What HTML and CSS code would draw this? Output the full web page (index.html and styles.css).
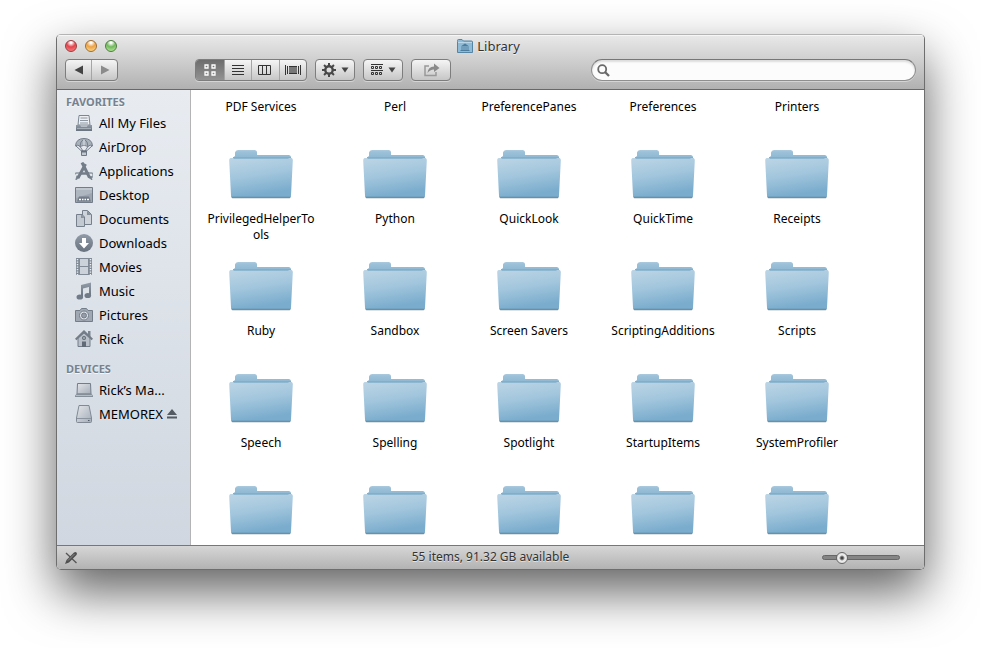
FILE: index.html
```html
<!DOCTYPE html>
<html lang="en">
<head>
<meta charset="utf-8">
<title>Library</title>
<link rel="stylesheet" href="styles.css">
</head>
<body>
<svg class="defs" aria-hidden="true">
  <defs>
    <linearGradient id="folder-front" x1="0" y1="0" x2="0.25" y2="1">
      <stop offset="0" stop-color="#bdd5e5"/><stop offset="0.5" stop-color="#a2c6dd"/><stop offset="1" stop-color="#7aaccd"/>
    </linearGradient>
    <linearGradient id="folder-back" x1="0" y1="0" x2="0" y2="1">
      <stop offset="0" stop-color="#abcadf"/><stop offset="0.2" stop-color="#9cc1d9"/><stop offset="1" stop-color="#8ab4d0"/>
    </linearGradient>
    <linearGradient id="steel" x1="0" y1="0" x2="0" y2="1">
      <stop offset="0" stop-color="#929ca8"/><stop offset="1" stop-color="#68727f"/>
    </linearGradient>
    <linearGradient id="pale" x1="0" y1="0" x2="1" y2="1">
      <stop offset="0" stop-color="#e4e7eb"/><stop offset="1" stop-color="#a4acb7"/>
    </linearGradient>
    <symbol id="folder" viewBox="0 0 64 50">
      <path d="M2.500 46h59v1.300q0 1-1 1H3.500q-1 0-1-1z" fill="#7a8b98"/>
      <path d="M4 10V7.500L6 6V2.500Q6.500 0 9 0H25.500Q28 0 28 2.500V5H59.500Q62 5 62 7.500L63 10z" fill="url(#folder-back)"/>
      <path d="M4 7.500H62" stroke="#7fafcc"/>
      <path d="M1.500 8H4L5 9H59L60 8H62.500Q64 8.500 63.800 10.500L62 45.500Q62 47 60.500 47H3.500Q2 47 2 45.500L0.200 10.500Q0 8.500 1.500 8z" fill="url(#folder-front)"/>
      <path d="M2.500 46.500H61.500" stroke="#6f9fbe" stroke-opacity=".7"/>
    </symbol>
  </defs>
</svg>

<main class="window">
  <header class="titlebar">
    <div class="title-row">
      <div class="lights">
        <button class="light close" aria-label="Close"></button>
        <button class="light minimize" aria-label="Minimize"></button>
        <button class="light expand" aria-label="Zoom"></button>
      </div>
      <h1 class="title">
        <svg width="16" height="14" viewBox="0 0 16 14"><path d="M.5 2.500V1.500Q.5.500 1.500.500H5L6.500 2H14.500Q15.500 2 15.500 3V13.500H.5z" fill="#8fbbd6" stroke="#5485a5"/><path d="M1 3.500H15" stroke="#b9d7e8"/><path d="M4 7.200L8 4.500 12 7.200z" fill="#4d7d9d"/><path d="M5 7.500V11M7 7.500V11M9 7.500V11M11 7.500V11" stroke="#4d7d9d" stroke-width=".9"/><path d="M3.500 11.500H12.500" stroke="#4d7d9d"/></svg>
        Library
      </h1>
    </div>
    <div class="toolbar">
      <div class="group nav">
        <button aria-label="Back"><svg width="10" height="10" viewBox="0 0 10 10"><path d="M9 .5V9.500L.5 5z" fill="#444"/></svg></button>
        <button aria-label="Forward"><svg width="10" height="10" viewBox="0 0 10 10"><path d="M1 .5V9.500L9.500 5z" fill="#8b8b8b"/></svg></button>
      </div>
      <div class="group views">
        <button class="active" aria-label="Icon view"><svg width="12" height="12" viewBox="0 0 12 12" fill="none" stroke="#fff" stroke-width="1.300"><path d="M1 1H4V4H1zM8 1H11V4H8zM1 8H4V11H1zM8 8H11V11H8z"/></svg></button>
        <button aria-label="List view"><svg width="12" height="12" viewBox="0 0 12 12" stroke="#333"><path d="M0 1.500H12M0 4.500H12M0 7.500H12M0 10.500H12"/></svg></button>
        <button aria-label="Column view"><svg width="14" height="12" viewBox="0 0 14 12" fill="none" stroke="#333"><path d="M.5 1.500H12.500V10.500H.5zM4.500 1V11M8.500 1V11"/></svg></button>
        <button aria-label="Cover Flow"><svg width="16" height="12" viewBox="0 0 16 12" stroke="#333"><path d="M4 2H12V9.500H4z" fill="#777" stroke="none"/><path d="M.5 1V11M2.500 2V10M13.500 2V10M15.500 1V11M4 2.500H12M4 9.500H12"/></svg></button>
      </div>
      <button class="tool" aria-label="Actions">
        <svg width="14" height="14" viewBox="0 0 14 14" fill="none" stroke="#484848"><circle cx="7" cy="7" r="3.700" stroke-width="2.400"/><path d="M7 0V3M7 11V14M0 7H3M11 7H14M2.050 2.050L4.200 4.200M9.800 9.800L11.950 11.950M2.050 11.950L4.200 9.800M9.800 4.200L11.950 2.050" stroke-width="2"/></svg>
        <svg width="8" height="6" viewBox="0 0 8 6"><path d="M.5.500H7.500L4 5.500z" fill="#444"/></svg>
      </button>
      <button class="tool" aria-label="Arrange">
        <svg width="12" height="12" viewBox="0 0 12 12" stroke="#333" fill="none"><path d="M0 .5H12M0 6.500H12"/><path d="M.5 2.500H2.500V4.500H.500zM4.500 2.500H6.500V4.500H4.500zM8.500 2.500H10.500V4.500H8.500zM.5 8.500H2.500V10.500H.500zM4.500 8.500H6.500V10.500H4.500zM8.500 8.500H10.500V10.500H8.500z"/></svg>
        <svg width="8" height="6" viewBox="0 0 8 6"><path d="M.5.500H7.500L4 5.500z" fill="#444"/></svg>
      </button>
      <button class="tool" aria-label="Share">
        <svg width="17" height="14" viewBox="0 0 17 14"><path d="M6 3H2V12.500H13V9" fill="none" stroke="#999" stroke-width="1.500"/><path d="M4.500 10Q5 3.800 11 3.500V.5L16.500 5 11 9V6.500Q7 6.500 4.500 10z" fill="#8a8a8a"/></svg>
      </button>
      <label class="search">
        <svg width="13" height="13" viewBox="0 0 13 13" fill="none" stroke="#6a6a6a"><circle cx="5.200" cy="5.200" r="4" stroke-width="1.800"/><path d="M8 8L12 12" stroke-width="2.300"/></svg>
        <input type="search" aria-label="Search">
      </label>
    </div>
  </header>

  <div class="body">
    <nav class="sidebar">
      <h2>FAVORITES</h2>
      <ul>
        <li><a href="#"><svg viewBox="0 0 18 18"><path d="M4 1.500H14L15 11H3z" fill="#eef0f3" stroke="#7d8793"/><path d="M5.500 4H12.500M5 6.500H13M5 9H13" stroke="#8d96a1"/><path d="M1 11H5L6 12.500H12L13 11H17V17H1z" fill="url(#steel)"/><path d="M2 14.500H16" stroke="#a5adb7"/></svg>All My Files</a></li>
        <li><a href="#"><svg viewBox="0 0 18 18"><path d="M.5 8Q1 .5 9 .5T17.500 8Q15 6 13 8.500 9 6 5 8.500 3 6 .5 8z" fill="#a9b1bb" stroke="#737d89"/><path d="M9 1Q5 3 5 8.500M9 1Q13 3 13 8.500" fill="none" stroke="#737d89"/><path d="M9 1V7.500" stroke="#dfe3e8"/><path d="M1 8L7 13.500M17 8L11 13.500M5 8.500L8 13M13 8.500L10 13" fill="none" stroke="#737d89"/><path d="M6.500 13H11.500V17.500H6.500z" fill="#c3c9d0" stroke="#6e7884"/><path d="M6 13.500H12" stroke="#68727f" stroke-width="2"/></svg>AirDrop</a></li>
        <li><a href="#"><svg viewBox="0 0 18 18" fill="none" stroke="#737d89"><path d="M0 12.500Q0 11 1.500 11H5M13 11H16.500Q18 11 18 12.500V15H16" stroke="#8e97a2" stroke-width="1.500"/><path d="M7 .5L14.500 15.500M10.500 2L3 16" stroke-width="3"/><path d="M5 11.500H14" stroke-width="2.500"/><path d="M2 13.500L.8 17.800 4.500 15.500M13.500 15.500L17 17.800 16 14" fill="#737d89" stroke-width=".8"/></svg>Applications</a></li>
        <li><a href="#"><svg viewBox="0 0 18 18"><path d="M.5 1.500H17.500V16.500H.5z" fill="#aeb6bf" stroke="#737d89"/><path d="M1 3H17" stroke="#d5dae0"/><path d="M1 16V12L17 7V16z" fill="#9ca5b0"/><path d="M2 15.500L4 10.500H14L16 15.500z" fill="#737d89"/><path d="M4 13.500H6M7 13.500H8.500M9.500 13.500H11M12 13.500H14" stroke="#fff" stroke-width="1.500"/></svg>Desktop</a></li>
        <li><a href="#"><svg viewBox="0 0 18 18"><path d="M1.500 4.500H7L9.500 7V16.500H1.500z" fill="#c3c9d1" stroke="#76808c"/><path d="M7.500 .5H12.500L16.500 4.500V14.500H9.500V7L7.500 5z" fill="#cfd4da" stroke="#76808c"/><path d="M12 .5V5H16.500zM6 4.500V8H9.500z" fill="#87919c"/></svg>Documents</a></li>
        <li><a href="#"><svg viewBox="0 0 18 18"><circle cx="9" cy="9" r="9" fill="url(#steel)"/><path d="M7 4H11V9H14L9 14.500 4 9H7z" fill="#fff"/></svg>Downloads</a></li>
        <li><a href="#"><svg viewBox="0 0 18 18"><path d="M1 0H17V17H1z" fill="#818b97"/><path d="M5 1H13V8H5zM5 9H13V16H5z" fill="#ccd2d9"/><path d="M2.500 1V17M15.500 1V17" stroke="#edf0f3" stroke-width="1.400" stroke-dasharray="1.200 1.300"/></svg>Movies</a></li>
        <li><a href="#"><svg viewBox="0 0 18 18"><path d="M6 3L16 .5V14H14V5L8 6.500V15H6z" fill="url(#steel)"/><ellipse cx="4.800" cy="15" rx="3.300" ry="2.600" fill="#717b87"/><ellipse cx="12.800" cy="13.500" rx="3.300" ry="2.600" fill="#717b87"/></svg>Music</a></li>
        <li><a href="#"><svg viewBox="0 0 18 18"><path d="M.5 4.500H5L6.500 2.500H11.500L13 4.500H17.500V15.500H.5z" fill="#a0a9b3" stroke="#737d89"/><circle cx="9" cy="9.500" r="4.500" fill="#e0e4e8" stroke="#737d89"/><circle cx="9" cy="9.500" r="2.500" fill="#939ca7" stroke="#737d89"/></svg>Pictures</a></li>
        <li><a href="#"><svg viewBox="0 0 18 18"><path d="M3 8L9 3 15 8V16.500H3z" fill="#b9c0c9" stroke="#737d89"/><path d="M13 1H15.500V7L13 5z" fill="#7b8591"/><path d="M.7 9.500L9 1.500 17.300 9.500" fill="none" stroke="#737d89" stroke-width="2.200"/><circle cx="9" cy="8" r="2" fill="#5f6975"/><circle cx="9" cy="8" r=".8" fill="#dfe3e8"/><path d="M7 11.500H11V17H7z" fill="#606a76"/></svg>Rick</a></li>
      </ul>
      <h2>DEVICES</h2>
      <ul>
        <li><a href="#"><svg viewBox="0 0 18 18"><path d="M2.500 2.500H15.500L16 13H2z" fill="url(#pale)" stroke="#737d89"/><path d="M2 12.500H16L18 14.500V16H0V14.500z" fill="#858f9a"/><path d="M1 14.500H17" stroke="#b5bcc5"/></svg>Rick’s Ma...</a></li>
        <li><a href="#"><svg viewBox="0 0 18 18"><path d="M4 .5H14L16.500 13V16.500Q16.500 17.500 15.500 17.500H2.500Q1.500 17.500 1.500 16.500V13z" fill="url(#pale)" stroke="#808994"/><path d="M2 13.500H16" stroke="#8b949f"/><path d="M13 15.500H14.500" stroke="#505a66"/></svg>MEMOREX</a><button class="eject" aria-label="Eject"><svg width="10" height="10" viewBox="0 0 10 10"><path d="M5 0L10 6H0zM0 7.500H10V9.500H0z" fill="#555b62"/></svg></button></li>
      </ul>
    </nav>

    <section class="files">
      <div class="item"><span>PDF Services</span></div>
      <div class="item"><span>Perl</span></div>
      <div class="item"><span>PreferencePanes</span></div>
      <div class="item"><span>Preferences</span></div>
      <div class="item"><span>Printers</span></div>
      <div class="item"><svg><use href="#folder"/></svg><span>PrivilegedHelperTo<wbr>ols</span></div>
      <div class="item"><svg><use href="#folder"/></svg><span>Python</span></div>
      <div class="item"><svg><use href="#folder"/></svg><span>QuickLook</span></div>
      <div class="item"><svg><use href="#folder"/></svg><span>QuickTime</span></div>
      <div class="item"><svg><use href="#folder"/></svg><span>Receipts</span></div>
      <div class="item"><svg><use href="#folder"/></svg><span>Ruby</span></div>
      <div class="item"><svg><use href="#folder"/></svg><span>Sandbox</span></div>
      <div class="item"><svg><use href="#folder"/></svg><span>Screen Savers</span></div>
      <div class="item"><svg><use href="#folder"/></svg><span>ScriptingAdditions</span></div>
      <div class="item"><svg><use href="#folder"/></svg><span>Scripts</span></div>
      <div class="item"><svg><use href="#folder"/></svg><span>Speech</span></div>
      <div class="item"><svg><use href="#folder"/></svg><span>Spelling</span></div>
      <div class="item"><svg><use href="#folder"/></svg><span>Spotlight</span></div>
      <div class="item"><svg><use href="#folder"/></svg><span>StartupItems</span></div>
      <div class="item"><svg><use href="#folder"/></svg><span>SystemProfiler</span></div>
      <div class="item"><svg><use href="#folder"/></svg></div>
      <div class="item"><svg><use href="#folder"/></svg></div>
      <div class="item"><svg><use href="#folder"/></svg></div>
      <div class="item"><svg><use href="#folder"/></svg></div>
      <div class="item"><svg><use href="#folder"/></svg></div>
    </section>
  </div>

  <footer class="status">
    <svg width="14" height="14" viewBox="0 0 14 14"><path d="M2 2L12.500 12" stroke="#555" stroke-width="1.300"/><path d="M1 13L2.500 9 10 1.500Q11.500.5 12.500 1.500T12.500 4L5 11.500z" fill="#505050"/><path d="M4 9.500L10.500 3" stroke="#888"/></svg>
    <span>55 items, 91.32 GB available</span>
    <input type="range" min="0" max="100" value="21" aria-label="Icon size">
  </footer>
</main>
</body>
</html>
```
FILE: styles.css
```css
* { box-sizing: border-box; }

body {
  margin: 0;
  padding: 34px 56px 78px;
  background: #fff;
  color: #000;
  font: 12px/16px "Noto Sans", "Open Sans", sans-serif;
}

button {
  margin: 0;
  padding: 0;
  border: 0;
  background: none;
}

.defs {
  position: absolute;
  width: 0;
  height: 0;
}

.window {
  overflow: hidden;
  border: 1px solid #6e6e6e;
  border-top-color: #b4b4b4;
  border-radius: 5px;
  box-shadow: 0 22px 50px rgba(0, 0, 0, 0.62);
}

.titlebar {
  padding: 0 8px 8px;
  border-bottom: 1px solid #686868;
  background: linear-gradient(#e9e9e9, #b1b1b1);
  box-shadow: inset 0 1px #f6f6f6;
}

.title-row {
  display: grid;
  grid-template-columns: 1fr auto 1fr;
  align-items: center;
  height: 22px;
  margin-bottom: 2px;
}

.lights {
  display: flex;
  gap: 8px;
}

.light {
  width: 12px;
  height: 12px;
  border: 1px solid;
  border-radius: 50%;
}

.close {
  border-color: #9b3b40;
  background: radial-gradient(circle at 50% 15%, #fff 0 8%, #e2444b 45%, #ff8a88 100%);
}

.minimize {
  border-color: #a06c30;
  background: radial-gradient(circle at 50% 15%, #fff 0 8%, #eca244 45%, #ffe698 100%);
}

.expand {
  border-color: #4d7c40;
  background: radial-gradient(circle at 50% 15%, #fff 0 8%, #71b85c 45%, #c4f4a6 100%);
}

.title {
  display: flex;
  align-items: center;
  gap: 4px;
  margin: 0;
  padding-right: 4px;
  color: #333;
  font-size: 13px;
  font-weight: 400;
  text-shadow: 0 1px #f0f0f0;
}

.toolbar {
  display: flex;
  gap: 8px;
}

.group,
.tool {
  display: flex;
  height: 22px;
  border: 1px solid #7d7d7d;
  border-radius: 4px;
  background: linear-gradient(#f5f5f5, #c6c6c6);
  box-shadow: 0 1px #d5d5d5;
}

.group { overflow: hidden; }

.group button {
  display: grid;
  flex: 1;
  place-items: center;
}

.group button + button { border-left: 1px solid #a5a5a5; }

.nav {
  width: 53px;
  margin-right: 69px;
}

.views { width: 112px; }

.group .active {
  flex: 0 0 28px;
  background: linear-gradient(#6d6d6d, #929292);
}

.tool {
  align-items: center;
  justify-content: center;
  gap: 5px;
  width: 40px;
}

.search {
  display: flex;
  flex: 0 1 325px;
  align-items: center;
  gap: 5px;
  height: 22px;
  margin-left: auto;
  padding: 0 5px;
  border: 1px solid #8f8f8f;
  border-top-color: #777;
  border-radius: 11px;
  background: #fcfcfc;
  box-shadow: inset 0 2px 2px #ddd, 0 1px #d5d5d5;
}

.search input {
  flex: 1;
  min-width: 0;
  padding: 0;
  border: 0;
  outline: 0;
  background: none;
  font: inherit;
}

.body {
  display: flex;
  background: #fff;
}

.sidebar {
  flex: 0 0 134px;
  padding-top: 3px;
  border-right: 1px solid #b4b4b4;
  background: linear-gradient(#e8ecf1, #d0d7e0);
  font-size: 13px;
}

.sidebar h2 {
  margin: 0 0 1px;
  padding-left: 9px;
  color: #76828f;
  font-size: 11px;
  font-weight: 700;
  line-height: 17px;
  text-shadow: 0 1px #f4f6f8;
}

.sidebar ul {
  margin: 0 0 9px;
  padding: 0;
  list-style: none;
}

.sidebar li {
  display: flex;
  align-items: center;
  gap: 4px;
  height: 24px;
  padding-left: 18px;
}

.sidebar a {
  display: flex;
  align-items: center;
  gap: 6px;
  color: inherit;
  text-decoration: none;
  white-space: nowrap;
}

.sidebar a svg {
  width: 18px;
  height: 18px;
}

.eject { display: flex; }

.files {
  display: grid;
  flex: 1;
  grid-template-columns: repeat(5, 134px);
  grid-template-rows: 48px repeat(3, 112px) 71px;
  padding-left: 3px;
}

.item {
  display: flex;
  flex-direction: column;
  align-items: center;
  gap: 11px;
  padding-top: 12px;
  text-align: center;
}

.item:nth-child(-n+5) { padding-top: 9px; }

.item span { max-width: 116px; }

.item svg {
  width: 64px;
  height: 50px;
}

.status {
  display: grid;
  grid-template-columns: 1fr auto 1fr;
  align-items: center;
  height: 24px;
  padding: 0 7px;
  border-top: 1px solid #777;
  background: linear-gradient(#d6d6d6, #b3b3b3);
  color: #333;
  text-shadow: 0 1px #e3e3e3;
}

.status span {
  font-size: 12px;
  padding-bottom: 1px;
}

.status input {
  justify-self: end;
  width: 78px;
  height: 12px;
  margin: 0 17px 0 0;
  background: none;
  appearance: none;
}

.status input::-webkit-slider-runnable-track {
  height: 5px;
  border: 1px solid #666;
  border-radius: 3px;
  background: #858585;
}

.status input::-webkit-slider-thumb {
  width: 12px;
  height: 12px;
  margin-top: -4px;
  border: 1px solid #666;
  border-radius: 50%;
  background: radial-gradient(circle, #444 0 1px, #eee 3px, #d5d5d5);
  appearance: none;
}
```
